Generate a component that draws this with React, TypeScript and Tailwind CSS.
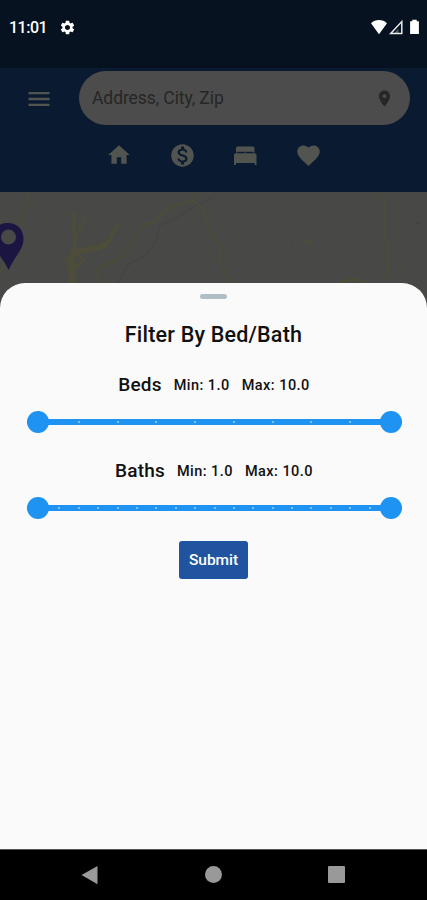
import type { ReactNode } from 'react'
import { MdFavorite, MdHome, MdLocationOn, MdMenu, MdMonetizationOn, MdSettings } from 'react-icons/md'

function StatusBar() {
  return (
    <div className="flex h-[68px] items-start justify-between bg-[#06121f] pt-[17px] pl-[9px] pr-[7px] text-white">
      <div className="flex h-5 items-center">
        <span className="w-[50px] pt-[2px] text-[16px] font-medium leading-5 tracking-[-0.5px]">11:01</span>
        <MdSettings size={17} />
      </div>
      <svg width="50" height="20" viewBox="0 0 50 20" fill="none">
        <path d="M1 6.2C5.5 1.9 12.5 1.9 17 6.2L9 17.2Z" fill="#fff" />
        <path d="M31.800 4.6V16.4H20.7Z" stroke="#e8eaec" strokeWidth="1.5" />
        <path d="M28.5 11.5V16H24.5Z" fill="#e8eaec" fillOpacity="0.35" />
        <path d="M42.3 2.8H46.7V4.2H48.9V17H40.1V4.2H42.3Z" fill="#fff" />
      </svg>
    </div>
  )
}

function BedIcon() {
  return (
    <svg width="24" height="20" viewBox="0 0 24 20" fill="currentColor">
      <path d="M5 1.500H19.5Q21.5 1.500 21.5 3.300V7.500H19.800V6.800H13V7.500H11.500V6.800H4.700V7.500H3V3.300Q3 1.500 5 1.500Z" />
      <path d="M1 10Q1 8.200 2.800 8.200H21.700Q23.500 8.200 23.500 10V20H21.700V18H2.800V20H1Z" />
    </svg>
  )
}

function Header() {
  return (
    <header className="h-[124px] bg-[#0a1a30] pt-[3px] text-[#525450]">
      <div className="flex items-center pr-[17px] pl-[25px]">
        <MdMenu size={28} className="mt-px mr-[26px] shrink-0" />
        <div className="flex h-[54px] flex-1 items-center justify-between rounded-full bg-[#4c4c4c] pr-[16px] pl-[13px] text-[#262626]">
          <span className="-mt-px text-[17.500px] leading-6 tracking-[-0.08px]">Address, City, Zip</span>
          <MdLocationOn size={19} />
        </div>
      </div>
      <div className="mx-auto mt-[15px] grid h-[30px] w-[252px] grid-cols-4 place-items-center">
        <MdHome size={26} />
        <MdMonetizationOn size={27} />
        <BedIcon />
        <MdFavorite size={27} />
      </div>
    </header>
  )
}

function MapView() {
  return (
    <svg className="block bg-[#484846]" width="427" height="122" viewBox="0 0 427 122" fill="none">
      <g stroke="#4e4e36" strokeWidth="1.5" strokeLinejoin="round">
        <path d="M28 0L27 12L20 32L17 48L9 62L0 82" strokeWidth="1.3" />
        <path d="M98 100V82L99 76L110 71L122 65L130 55L136 44L145 32L154 31L164 20L175 13L192 9L196 10L205 20L207 33L214 46L220 53L221 71L228 86L234 91" />
        <path d="M194 0V9" strokeWidth="1.2" />
        <path d="M379 3L385 9V47L389 52V72L386 88" strokeWidth="1.4" />
        <path d="M340 91Q353 84 367 91" strokeWidth="1.8" />
      </g>
      <g stroke="#4d4d39" strokeLinecap="round" strokeLinejoin="round">
        <path d="M74 21V42L75 58" strokeWidth="3" />
        <path d="M75 58L71 72L74 98" strokeWidth="7" />
        <path d="M76 46L80 36L86 26" strokeWidth="2.2" />
        <path d="M73 64L84 57L98 55L108 51L113 40L117 34" strokeWidth="4" />
        <path d="M84 58L98 56L106 52" strokeWidth="6" />
        <path d="M66 68L77 62L84 69L73 77" strokeWidth="3" />
      </g>
      <path d="M303 44L306 49L313 51L308 52Z" fill="#4e4e36" stroke="#4e4e36" />
      <path d="M118 92L128 73L146 63L156 48L160 33L174 28L196 13L214 5" stroke="#444446" strokeWidth="1.2" />
      <path d="M92 15L101 25M57 50L64 41M291 46L292 54M308 30L312 36M337 25L345 32" stroke="#454543" strokeWidth="1" />
      <circle cx="418" cy="31" r="1.500" fill="#40423d" />
      <path d="M7.500 31C17 31 23.500 37 23.500 47C23.500 57 15 64 8.500 78C2 64 -8 57 -8 47C-8 37 -1 31 7.500 31Z" fill="#1b1541" />
      <circle cx="8.500" cy="45" r="7.500" fill="#484846" />
    </svg>
  )
}

function RangeSlider({ divisions }: { divisions: number }) {
  const ticks = Array.from({ length: divisions - 1 }, (_, i) => ((i + 1) / divisions) * 100)
  return (
    <div className="flex h-[22px] items-center pr-[25px] pl-[27px]">
      <div className="relative h-[6px] w-full rounded-full bg-[#1e93f2]">
        <div className="absolute inset-x-[13px] top-[2px] h-[2px]">
          {ticks.map((left) => (
            <span key={left} className="absolute size-[2px] -translate-x-1/2 rounded-full bg-[#a5d4fa]" style={{ left: `${left}%` }} />
          ))}
        </div>
        <span className="absolute -top-[8px] left-0 size-[22px] rounded-full bg-[#1e93f2]" />
        <span className="absolute -top-[8px] right-0 size-[22px] rounded-full bg-[#1e93f2]" />
      </div>
    </div>
  )
}

function RangeLabel({ children }: { children: ReactNode }) {
  return (
    <div className="flex h-6 items-center justify-center gap-[12px] pl-px text-[14.500px] font-medium tracking-[0.45px]">
      <span className="text-[19px] tracking-[0.2px]">{children}</span>
      <span className="pt-px">Min: 1.0</span>
      <span className="pt-px">Max: 10.0</span>
    </div>
  )
}

function FilterSheet() {
  return (
    <section className="relative -mt-[31px] flex h-[566px] flex-col rounded-t-[25px] bg-[#fafafa] pt-[11px] text-[#111]">
      <div className="mx-auto h-[5px] w-[27px] rounded-full bg-[#b0bec5]" />
      <h1 className="mt-[22px] text-center text-[21.500px] font-medium leading-7 tracking-[0.2px]">Filter By Bed/Bath</h1>
      <div className="mt-[24px]">
        <RangeLabel>Beds</RangeLabel>
      </div>
      <div className="mt-[14px]">
        <RangeSlider divisions={9} />
      </div>
      <div className="mt-[26px]">
        <RangeLabel>Baths</RangeLabel>
      </div>
      <div className="mt-[14px]">
        <RangeSlider divisions={18} />
      </div>
      <button className="mx-auto mt-[22px] h-[38px] w-[69px] rounded-[3px] bg-[#2154a0] pt-[2px] text-[15.500px] font-medium tracking-[-0.05px] text-white">
        Submit
      </button>
    </section>
  )
}

function NavigationBar() {
  return (
    <nav className="flex h-[51px] items-center justify-between border-t border-[#555] bg-black pr-[82px] pb-px pl-[81px] text-[#999]">
      <svg width="17" height="20" viewBox="0 0 17 20" fill="currentColor">
        <path d="M16.500 1V19.200L0.500 10Z" />
      </svg>
      <span className="size-[17px] rounded-full bg-[#999]" />
      <span className="size-[17px] rounded-[1px] bg-[#999]" />
    </nav>
  )
}

export default function App() {
  return (
    <div className="h-[900px] w-[427px] overflow-hidden bg-black font-['Roboto',sans-serif]">
      <StatusBar />
      <Header />
      <MapView />
      <FilterSheet />
      <NavigationBar />
    </div>
  )
}
